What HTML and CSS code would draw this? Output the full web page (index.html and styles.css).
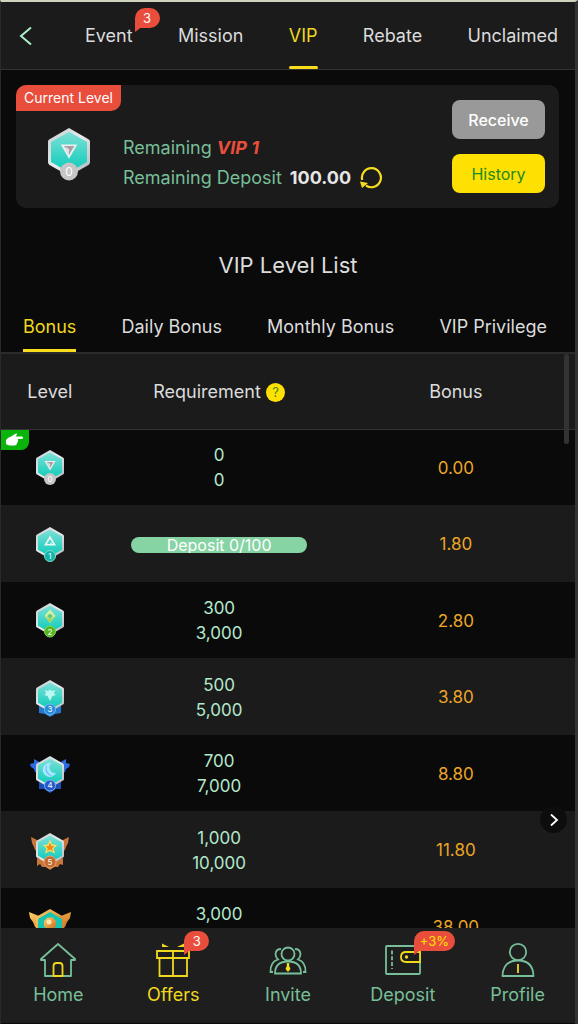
FILE: index.html
```html
<!DOCTYPE html>
<html lang="en">
<head>
    <meta charset="UTF-8">
    <meta name="viewport" content="width=device-width, initial-scale=1.0">
    <title>VIP</title>
    <link rel="stylesheet" href="styles.css">
</head>
<body>
    <svg class="defs" width="0" height="0" aria-hidden="true">
        <defs>
            <linearGradient id="rim" x1="0" y1="0" x2="1" y2="1">
                <stop offset="0" stop-color="#c9cdcf"/>
                <stop offset="0.5" stop-color="#e8eaeb"/>
                <stop offset="1" stop-color="#aeb3b6"/>
            </linearGradient>
            <linearGradient id="teal" x1="0" y1="0" x2="0" y2="1">
                <stop offset="0" stop-color="#7fe0d6"/>
                <stop offset="1" stop-color="#08cbb9"/>
            </linearGradient>
            <linearGradient id="gold" x1="0" y1="0" x2="1" y2="1">
                <stop offset="0" stop-color="#ffd268"/>
                <stop offset="1" stop-color="#c96a1c"/>
            </linearGradient>
            <symbol id="hex" viewBox="0 0 40 40">
                <path fill="url(#rim)" d="M20 2 33 9.500Q34 10 34 11V25Q34 26 33 26.600L20 34 7 26.600Q6 26 6 25V11Q6 10 7 9.500Z"/>
                <path fill="url(#teal)" d="M20 4.500 32 11.300V24.700L20 31.500 8 24.700V11.300Z"/>
            </symbol>
            <symbol id="medal-0" viewBox="0 0 40 40">
                <use href="#hex" width="40" height="40"/>
                <path fill="#eef0f1" d="M14.500 13H25.500L20 22.500Z"/>
                <path fill="#a89fa4" d="M16.500 14H23.500L20 20Z"/>
                <path fill="#dfe2e3" d="M16.500 14 20 16 20 20Z"/>
                <circle cx="20" cy="31" r="6" fill="#c6c6c6"/>
                <text class="medal-num" x="20" y="34">0</text>
            </symbol>
        </defs>
    </svg>

    <div class="app">
        <header class="topbar">
            <button type="button" class="back" aria-label="Back">
                <svg width="14" height="20" viewBox="0 0 14 20"><path d="M13 1.500 3 10 13 18.500" fill="none" stroke="#a9f0c8" stroke-width="2"/></svg>
            </button>
            <nav class="tabs">
                <a href="#">Event<span class="bubble tab-bubble">3</span></a>
                <a href="#">Mission</a>
                <a href="#" class="active">VIP</a>
                <a href="#">Rebate</a>
                <a href="#">Unclaimed</a>
            </nav>
        </header>

        <main class="content">
            <section class="card">
                <span class="card-tag">Current Level</span>
                <svg class="card-medal" width="60" height="60" role="img" aria-label="VIP 0"><use href="#medal-0" width="60" height="60"/></svg>
                <div class="card-text">
                    <div>Remaining <b class="vip">VIP 1</b></div>
                    <div class="deposit-line">Remaining Deposit <b class="amount">100.00</b>
                        <button type="button" class="refresh" aria-label="Refresh">
                            <svg width="24" height="24" viewBox="0 0 24 24"><path d="M3.200 14A9.500 9.500 0 1 1 7 19.500" fill="none" stroke="#f5dc1c" stroke-width="2.200"/><path d="M1 15.500 9 17 3 22Z" fill="#f5dc1c"/></svg>
                        </button>
                    </div>
                </div>
                <div class="card-actions">
                    <button type="button" class="btn btn-grey">Receive</button>
                    <button type="button" class="btn btn-yellow">History</button>
                </div>
            </section>

            <h2>VIP Level List</h2>

            <nav class="subtabs">
                <a href="#" class="active">Bonus</a>
                <a href="#">Daily Bonus</a>
                <a href="#">Monthly Bonus</a>
                <a href="#">VIP Privilege</a>
            </nav>

            <div class="table-wrap">
                <table class="levels">
                    <thead>
                        <tr>
                            <th class="col-level">Level</th>
                            <th class="col-req">Requirement <span class="help">?</span></th>
                            <th>Bonus</th>
                        </tr>
                    </thead>
                    <tbody>
                        <tr>
                            <td>
                                <span class="current">
                                    <svg width="20" height="16" viewBox="0 0 20 16"><path fill="#fff" d="M1 8Q3 5 6 4.500L10 2Q12 1 12 2.500L10.500 4.500H17Q18.500 5 18 6.200 17.500 7 16 7H12.500Q13.500 7.500 13 9 13 10.500 12 11 12 13 10 13.500H6Q3 13.500 1 12Z"/></svg>
                                </span>
                                <svg class="medal" width="40" height="40"><use href="#medal-0" width="40" height="40"/></svg>
                            </td>
                            <td>0<br>0</td>
                            <td>0.00</td>
                        </tr>
                        <tr>
                            <td>
                                <svg class="medal" width="40" height="40" viewBox="0 0 40 40">
                                    <use href="#hex" width="40" height="40"/>
                                    <path fill="#e7f5f4" fill-rule="evenodd" d="M20 10.500 26 20.500H14ZM20 14 17 19H20L21 17 22 19H23Z"/>
                                    <circle cx="20" cy="31" r="5.500" fill="#12b5aa" stroke="#7ed8d1"/>
                                    <text class="medal-num" x="20" y="34">1</text>
                                </svg>
                            </td>
                            <td><div class="progress">Deposit 0/100</div></td>
                            <td>1.80</td>
                        </tr>
                        <tr>
                            <td>
                                <svg class="medal" width="40" height="40" viewBox="0 0 40 40">
                                    <use href="#hex" width="40" height="40"/>
                                    <path fill="#d7f3a2" d="M20 8.500 25.500 15 20 22 14.500 15Z"/>
                                    <path fill="#63c884" d="M20 12.500 23 15 20 18 17 15Z"/>
                                    <path fill="#a4d65f" d="M14.500 15 20 18 25.500 15 20 22Z"/>
                                    <circle cx="20" cy="30.500" r="5.500" fill="#55b51c" stroke="#85d65a"/>
                                    <text class="medal-num" x="20" y="34">2</text>
                                </svg>
                            </td>
                            <td>300<br>3,000</td>
                            <td>2.80</td>
                        </tr>
                        <tr>
                            <td>
                                <svg class="medal" width="40" height="40" viewBox="0 0 40 40">
                                    <path fill="#2479cf" d="M9 27 20 31 31 27V35L25 36 20 39 15 36 9 35Z"/>
                                    <use href="#hex" width="40" height="40"/>
                                    <path fill="#bcf8f3" d="M15 12 18 13 20 11.500 22 13 25 12 24 15.500 26 17 22.500 18 20 23 17.500 18 14 17 16 15.500Z"/>
                                    <circle cx="20" cy="31.500" r="5.500" fill="#2b8bd6" stroke="#74baf0"/>
                                    <text class="medal-num" x="20" y="34">3</text>
                                </svg>
                            </td>
                            <td>500<br>5,000</td>
                            <td>3.80</td>
                        </tr>
                        <tr>
                            <td>
                                <svg class="medal" width="40" height="40" viewBox="0 0 40 40">
                                    <path fill="#2c6be0" d="M0 10 4 9 4 5 11 9V21L5 18 4 15 1 13ZM40 10 36 9 36 5 29 9V21L35 18 36 15 39 13Z"/>
                                    <path fill="#1c4fb5" d="M9 26 20 31 31 26V35L26 35 20 39 14 35 9 35Z"/>
                                    <use href="#hex" width="40" height="40"/>
                                    <path fill="#a6e6ff" d="M21 9A7 7 0 1 0 26 19 6 6 0 0 1 21 9Z"/>
                                    <path fill="#4fa9ec" d="M17 11A7 7 0 0 0 23 22 8 8 0 0 1 17 11Z"/>
                                    <circle cx="20" cy="31.500" r="5.500" fill="#245bc9" stroke="#83abf5"/>
                                    <text class="medal-num" x="20" y="34">4</text>
                                </svg>
                            </td>
                            <td>700<br>7,000</td>
                            <td>8.80</td>
                        </tr>
                        <tr>
                            <td>
                                <svg class="medal" width="40" height="40" viewBox="0 0 40 40">
                                    <path fill="#c8763a" d="M1 6 9 10V21L5 19 4 16 2 12ZM39 6 31 10V21L35 19 36 16 38 12ZM7 27 20 31 33 27V34L30 33 28 36 24 36 20 39 16 36 12 36 10 33 7 35Z"/>
                                    <use href="#hex" width="40" height="40"/>
                                    <path fill="#ffe45d" d="M20 8.500 22 13.500 27 14 23.500 17.500 25 22.500 20 20 15 22.500 16.500 17.500 13 14 18 13.500Z"/>
                                    <path fill="#ef8a1d" d="M20 11.500 21.500 15 24.500 15.300 22.200 17.300 23 20.500 20 18.500 17 20.500 17.800 17.300 15.500 15.300 18.500 15Z"/>
                                    <circle cx="20" cy="31" r="6" fill="#c56b2f" stroke="#e7a26f"/>
                                    <text class="medal-num" x="20" y="34">5</text>
                                </svg>
                            </td>
                            <td>1,000<br>10,000</td>
                            <td>11.80</td>
                        </tr>
                        <tr>
                            <td>
                                <svg class="medal" width="42" height="40" viewBox="-1 0 42 40">
                                    <path fill="url(#gold)" d="M-1 5 9 9V22L5 20 3 15 0 11ZM41 5 31 9V22L35 20 37 15 40 11Z"/>
                                    <path fill="url(#gold)" d="M20 2 34 10V26L20 34 6 26V10Z"/>
                                    <path fill="#16c4b2" d="M20 5 32 12V24L20 31 8 24V12Z"/>
                                    <path fill="url(#gold)" d="M17.500 10.500H22.500L26 14V19L22.500 22.500H17.500L14 19V14Z"/>
                                    <circle cx="19" cy="15" r="2.500" fill="#ffe9b0"/>
                                </svg>
                            </td>
                            <td>3,000<br>30,000</td>
                            <td>38.00</td>
                        </tr>
                    </tbody>
                </table>
                <span class="scroll-thumb"></span>
            </div>
            <button type="button" class="next" aria-label="Next">
                <svg width="10" height="14" viewBox="0 0 10 14"><path d="M2 1.500 8 7 2 12.500" fill="none" stroke="#fff" stroke-width="1.800"/></svg>
            </button>
        </main>

        <nav class="bottom-nav">
            <a href="#">
                <svg width="38" height="36" viewBox="0 0 38 36" fill="none" stroke="#77bf98" stroke-width="1.800" stroke-linejoin="round">
                    <path d="M6 18V34H32V18H36V17L19 2 2 17V18Z"/>
                    <path stroke="#f0d81e" d="M14.500 34V24Q14.500 21 17.500 21H20.500Q23.500 21 23.500 24V34Z"/>
                </svg>
                Home
            </a>
            <a href="#" class="active">
                <svg width="38" height="36" viewBox="0 0 38 36" fill="none" stroke="#f0d81e" stroke-width="1.800">
                    <path d="M3 9H35V16H3ZM5.500 16V34H33V16M19 9V34"/>
                    <path fill="#f0d81e" stroke="none" d="M8 1.500 15 5H8ZM30 1.500 23 5H30Z"/>
                </svg>
                Offers
                <span class="bubble nav-bubble">3</span>
            </a>
            <a href="#">
                <svg width="38" height="36" viewBox="0 0 38 36" fill="none" stroke="#77bf98" stroke-width="1.800">
                    <circle cx="19" cy="12" r="6.500"/>
                    <path d="M6 31.500Q6 19.500 19 19.500T32 31.500Z"/>
                    <path d="M12 7Q7 7 6.500 12 6.500 15 9 17.500 1 20 1.500 30H4M26 7Q31 7 31.500 12 31.500 15 29 17.500 37 20 36.500 30H34"/>
                    <path fill="#f5dc1c" stroke="none" d="M19 20.500 20.500 22 20 23.500 21.500 27 19 30 16.500 27 18 23.500 17.500 22Z"/>
                </svg>
                Invite
            </a>
            <a href="#">
                <svg width="38" height="36" viewBox="0 0 38 36" fill="none" stroke="#77bf98" stroke-width="1.800">
                    <rect x="2" y="4" width="34" height="28" rx="1"/>
                    <path stroke-dasharray="4 1.800" d="M8 8.500V27"/>
                    <path fill="#1e1e1e" stroke="#f0d81e" d="M36 10H22Q17 10 17 15T22 20H36Z"/>
                    <circle cx="22.500" cy="15" r="1.700" fill="#f0d81e" stroke="none"/>
                </svg>
                Deposit
                <span class="bubble nav-bubble offer">+3%</span>
            </a>
            <a href="#">
                <svg width="38" height="36" viewBox="0 0 38 36" fill="none" stroke="#77bf98" stroke-width="1.800">
                    <circle cx="19" cy="10" r="8.200"/>
                    <path stroke-linejoin="round" d="M3.500 34Q4 18.500 19 18.500T34.500 34Z"/>
                    <path stroke="#f0d81e" d="M19 22V31"/>
                </svg>
                Profile
            </a>
        </nav>
    </div>
</body>
</html>
```
FILE: styles.css
```css
* {
    box-sizing: border-box;
}
body {
    margin: 0;
    background: #0a0a0a;
    color: #dcdcdc;
    font-family: Inter, "Liberation Sans", sans-serif;
    font-size: 18px;
    line-height: 25px;
}
a {
    color: inherit;
    text-decoration: none;
    white-space: nowrap;
}
button {
    font-family: inherit;
    border: none;
    padding: 0;
    cursor: pointer;
}
svg {
    display: block;
    flex: none;
}
.defs {
    position: absolute;
}
.app {
    height: 100vh;
    display: flex;
    flex-direction: column;
    border-top: 2px solid #cdd3bd;
    border-left: 1px solid #2a2a2a;
    border-right: 3px solid #333;
}

/* top bar */
.topbar {
    display: flex;
    flex: none;
    height: 68px;
    padding: 0 17px;
    background: #1b1b1b;
    border-bottom: 1px solid #333;
}
.back {
    display: flex;
    align-items: center;
    width: 67px;
    background: none;
}
.tabs {
    flex: 1;
    display: flex;
    justify-content: space-between;
}
.tabs a {
    position: relative;
    display: flex;
    align-items: center;
}
.active {
    color: #f0d81e;
}
.tabs .active::after {
    content: "";
    position: absolute;
    left: 0;
    right: 0;
    bottom: 0;
    height: 3px;
    border-radius: 2px;
    background: #f9dc1c;
}
.bubble {
    position: absolute;
    min-width: 25px;
    height: 20px;
    padding: 0 6px;
    border-radius: 10px 10px 10px 0;
    background: #e94e3d;
    color: #fff;
    font-size: 13px;
    line-height: 20px;
    text-align: center;
}
.bubble::after {
    content: "";
    position: absolute;
    left: 0;
    top: 18px;
    border-top: 6px solid #e94e3d;
    border-right: 8px solid transparent;
}
.tab-bubble {
    left: 100%;
    top: 6px;
    margin-left: 2px;
}

/* current level card */
.content {
    position: relative;
    flex: 1;
    min-height: 0;
    overflow: hidden;
    display: flex;
    flex-direction: column;
}
.card {
    position: relative;
    display: flex;
    flex: none;
    align-items: center;
    height: 123px;
    margin: 15px 16px 0 15px;
    padding: 0 14px 0 23px;
    border-radius: 10px;
    background: #1b1b1b;
}
.card-tag {
    position: absolute;
    left: 0;
    top: 0;
    height: 26px;
    padding: 0 8px;
    border-radius: 10px 0 10px 0;
    background: #e94e3d;
    color: #fff;
    font-size: 14px;
    line-height: 26px;
}
.card-medal {
    margin-top: 16px;
}
.card-text {
    flex: 1;
    margin: 32px 0 0 24px;
    color: #77bf98;
    line-height: 30px;
    white-space: nowrap;
}
.vip {
    color: #e94e3d;
    font-style: italic;
}
.deposit-line {
    display: flex;
    align-items: center;
    gap: 8px;
}
.amount {
    color: #e6e6e6;
}
.refresh {
    background: none;
}
.card-actions {
    display: flex;
    flex-direction: column;
    gap: 15px;
}
.btn {
    width: 93px;
    height: 39px;
    border-radius: 8px;
    font-size: 16px;
}
.btn-grey {
    background: #999;
    color: #fff;
    font-weight: 500;
}
.btn-yellow {
    background: #ffe003;
    color: #1c8a1c;
}

h2 {
    margin: 42px 0 0;
    font-size: 22px;
    font-weight: 400;
    line-height: 30px;
    text-align: center;
}
.subtabs {
    display: flex;
    flex: none;
    justify-content: space-between;
    margin-top: 20px;
    padding: 0 28px 0 22px;
    height: 54px;
    border-bottom: 2px solid #2b2b2b;
}
.subtabs a {
    line-height: 54px;
}
.subtabs .active {
    border-bottom: 3px solid #f9dc1c;
}

/* level table */
.table-wrap {
    position: relative;
}
.levels {
    width: 100%;
    table-layout: fixed;
    border-collapse: collapse;
    text-align: center;
    color: #b4e8cc;
}
.levels th {
    height: 75px;
    padding: 0;
    background: #1b1b1b;
    border-bottom: 1px solid #333;
    color: #dcdcdc;
    font-weight: 400;
}
.col-level {
    width: 17%;
}
.col-req {
    width: 42%;
}
.levels td {
    position: relative;
    height: 76px;
    padding: 2px 0 0;
    font-size: 17px;
}
.levels tr:nth-child(even) td {
    height: 77px;
    background: #1b1b1b;
}
.levels th:last-child,
.levels td:last-child {
    padding-right: 3px;
}
.levels td:last-child {
    color: #eba527;
}
.help {
    display: inline-block;
    width: 19px;
    height: 19px;
    border-radius: 50%;
    background: #ffe003;
    color: #4c8a1c;
    font-size: 13px;
    line-height: 19px;
    vertical-align: 1px;
}
.current {
    position: absolute;
    left: 0;
    top: 0;
    display: flex;
    align-items: center;
    justify-content: center;
    width: 28px;
    height: 20px;
    border-radius: 0 0 8px 0;
    background: #0ab40a;
}
.medal {
    margin: 0 auto;
}
.medal-num {
    fill: #fff;
    font-size: 8px;
    text-anchor: middle;
}
.progress {
    width: 176px;
    height: 16px;
    margin: 0 auto;
    border-radius: 8px;
    overflow: hidden;
    background: #86d3a4;
    color: #fff;
    font-size: 16px;
    line-height: 16px;
}
.scroll-thumb {
    position: absolute;
    right: 6px;
    top: 0;
    width: 5px;
    height: 90px;
    border-radius: 3px;
    background: #333;
}
.next {
    position: absolute;
    right: 8px;
    bottom: 95px;
    display: flex;
    align-items: center;
    justify-content: center;
    width: 27px;
    height: 27px;
    border-radius: 50%;
    background: #0d0d0d;
}

/* bottom navigation */
.bottom-nav {
    display: flex;
    flex: none;
    height: 96px;
    background: #1e1e1e;
    color: #77bf98;
    border-bottom: 1px solid #0a0a0a;
}
.bottom-nav a {
    position: relative;
    flex: 1;
    display: flex;
    flex-direction: column;
    align-items: center;
    gap: 4px;
    padding-top: 14px;
}
.bottom-nav .active {
    color: #f0d81e;
}
.nav-bubble {
    left: 50%;
    top: 3px;
    margin-left: 11px;
}
.offer {
    color: #ffe003;
}
```
